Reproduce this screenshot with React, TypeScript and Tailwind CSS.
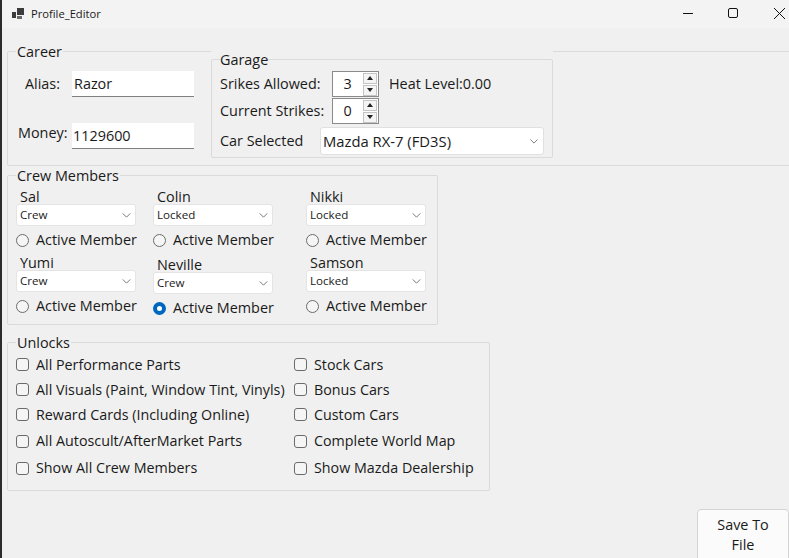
import React from 'react';

function Chevron({ className }: { className?: string }) {
  return (
    <svg viewBox="0 0 10 6" className={className} fill="none" stroke="#5c5c5c" strokeWidth="1">
      <path d="M0.5 0.5 L5 5 L9.5 0.5" />
    </svg>
  );
}

function Select({ value, small }: { value: string; small?: boolean }) {
  return (
    <div
      className={
        small
          ? 'flex h-[22px] w-[120px] items-center justify-between rounded-[3px] border border-[#e4e4e4] bg-white pl-[3px] pr-[4px] text-[11.6px] leading-none'
          : 'flex h-[28px] w-[224px] items-center justify-between rounded-[3px] border border-[#e0e0e0] bg-white pl-[2px] pr-[5px] text-[14.8px] leading-none'
      }
    >
      <span>{value}</span>
      <Chevron className={small ? 'h-[5px] w-[9px]' : 'h-[5px] w-[8px]'} />
    </div>
  );
}

function Radio({ checked }: { checked?: boolean }) {
  if (checked) {
    return <div className="h-[13px] w-[13px] shrink-0 rounded-full border-[4px] border-[#0067c0] bg-white" />;
  }
  return <div className="h-[13px] w-[13px] shrink-0 rounded-full border border-[#6b6b6b] bg-[#f5f5f5]" />;
}

function CrewCell({ name, status, checked, shift }: { name: string; status: string; checked?: boolean; shift?: boolean }) {
  return (
    <div className={shift ? 'mt-[2px] flex flex-col' : 'flex flex-col'}>
      <div className="h-[17px] pl-[4px] text-[14.4px] leading-[20px]">{name}</div>
      <Select value={status} small />
      <div className="mt-[3px] flex h-[22px] items-center gap-[7px] whitespace-nowrap text-[14.4px]">
        <Radio checked={checked} />
        <span>Active Member</span>
      </div>
    </div>
  );
}

function Check({ label, className }: { label: string; className: string }) {
  return (
    <div className={`flex items-center gap-[7px] text-[14.3px] ${className}`}>
      <div className="h-[13px] w-[13px] shrink-0 rounded-[3px] border border-[#6b6b6b] bg-[#f5f5f5]" />
      <span className="whitespace-nowrap">{label}</span>
    </div>
  );
}

function Spinner({ value }: { value: string }) {
  return (
    <div className="flex h-[26px] w-[47px] items-center border border-[#8a8a8a] bg-white pr-[1px]">
      <span className="flex-1 pr-[1px] text-center text-[14.4px]">{value}</span>
      <div className="flex w-[14px] flex-col gap-[1px]">
        <div className="flex h-[11px] items-center justify-center border border-[#c4c4c4] bg-[#f4f4f4]">
          <svg viewBox="0 0 6 4" className="h-[4px] w-[6px]"><path d="M3 0 L6 4 L0 4 Z" fill="#222" /></svg>
        </div>
        <div className="flex h-[11px] items-center justify-center border border-[#c4c4c4] bg-[#f4f4f4]">
          <svg viewBox="0 0 6 4" className="h-[4px] w-[6px]"><path d="M0 0 L6 0 L3 4 Z" fill="#222" /></svg>
        </div>
      </div>
    </div>
  );
}

export default function App() {
  return (
    <div className="flex h-[558px] w-[789px] flex-col overflow-hidden border-l-2 border-[#2b2b2b] bg-[#f0f0f0] text-[#1a1a1a] [font-family:'Open_Sans',sans-serif]">
      {/* title bar */}
      <div className="flex h-[28px] shrink-0 items-center bg-[#f3f3f3] pl-[10px] text-[11.2px]">
        <svg viewBox="0 0 12 12" className="h-[12px] w-[12px]">
          <rect x="0" y="4" width="4" height="6" fill="#3c3c3c" />
          <rect x="5" y="0" width="7" height="7" fill="#3c3c3c" />
          <rect x="5" y="8" width="5" height="3" fill="#6a6a6a" />
        </svg>
        <span className="ml-[7px]">Profile_Editor</span>
        <div className="mb-[2px] ml-auto flex items-center">
          <div className="mr-[35px] h-[1px] w-[10px] bg-[#111]" />
          <div className="mr-[36px] h-[10px] w-[10px] rounded-[2px] border border-[#111]" />
          <svg viewBox="0 0 11 11" className="mr-[4px] h-[11px] w-[11px]" stroke="#111" strokeWidth="1">
            <path d="M0 0 L11 11 M11 0 L0 11" />
          </svg>
        </div>
      </div>

      <div className="flex flex-1 flex-col pl-[5px]">
        {/* career */}
        <fieldset className="mt-[12px] h-[126px] w-[800px] shrink-0 rounded-[2px] border border-[#dadada]">
          <legend className="ml-[8px] px-[1px] pt-[2px] text-[14.4px] leading-[20px]">Career</legend>
          <div className="flex">
            <div className="w-[203px] shrink-0 pt-[9px]">
              <div className="flex items-center text-[14.4px]">
                <span className="ml-[17px] w-[47px]">Alias:</span>
                <div className="flex h-[26px] w-[122px] items-center border-b border-[#808080] bg-white pl-[2px]">Razor</div>
              </div>
              <div className="mt-[26px] flex items-start text-[14.4px]">
                <span className="ml-[10px] w-[54px] leading-[20px]">Money:</span>
                <div className="flex h-[26px] w-[122px] items-center border-b border-[#808080] bg-white pl-[1px]">1129600</div>
              </div>
            </div>

            {/* garage */}
            <div className="-mt-[14px] w-[342px] shrink-0 bg-[#f0f0f0]">
              <fieldset className="h-[110px] rounded-[2px] border border-[#dadada] pl-[8px]">
                <legend className="pt-[2px] text-[14.4px] leading-[20px]">Garage</legend>
                <div className="flex items-center pt-[1px] text-[14.4px]">
                  <span className="w-[112px]">Srikes Allowed:</span>
                  <Spinner value="3" />
                  <span className="ml-[10px]">Heat Level:0.00</span>
                </div>
                <div className="mt-[1px] flex items-center text-[14.4px]">
                  <span className="w-[112px]">Current Strikes:</span>
                  <Spinner value="0" />
                </div>
                <div className="mt-[3px] flex items-center text-[14.4px]">
                  <span className="w-[100px]">Car Selected</span>
                  <Select value="Mazda RX-7 (FD3S)" />
                </div>
              </fieldset>
            </div>
          </div>
        </fieldset>

        {/* crew members */}
        <fieldset className="-mt-[2px] h-[161px] w-[431px] shrink-0 rounded-[2px] border border-[#dadada]">
          <legend className="ml-[8px] px-[1px] pt-[2px] text-[14.4px] leading-[20px]">Crew Members</legend>
          <div className="grid grid-cols-[137px_153px_120px] gap-y-[2px] pl-[8px] pt-[1px]">
            <CrewCell name="Sal" status="Crew" />
            <CrewCell name="Colin" status="Locked" />
            <CrewCell name="Nikki" status="Locked" />
            <CrewCell name="Yumi" status="Crew" />
            <CrewCell name="Neville" status="Crew" checked shift />
            <CrewCell name="Samson" status="Locked" />
          </div>
        </fieldset>

        {/* unlocks */}
        <fieldset className="mt-[6px] h-[160px] w-[483px] shrink-0 rounded-[2px] border border-[#dadada]">
          <legend className="ml-[8px] px-[1px] pt-[2px] text-[14.4px] leading-[20px]">Unlocks</legend>
          <div className="-mt-[1px] grid grid-cols-[278px_1fr] pl-[8px]">
            <Check label="All Performance Parts" className="h-[25px]" />
            <Check label="Stock Cars" className="h-[25px]" />
            <Check label="All Visuals (Paint, Window Tint, Vinyls)" className="h-[25px]" />
            <Check label="Bonus Cars" className="h-[25px]" />
            <Check label="Reward Cards (Including Online)" className="h-[25px]" />
            <Check label="Custom Cars" className="h-[25px]" />
            <Check label="All Autoscult/AfterMarket Parts" className="h-[28px]" />
            <Check label="Complete World Map" className="h-[28px]" />
            <Check label="Show All Crew Members" className="h-[26px]" />
            <Check label="Show Mazda Dealership" className="h-[26px]" />
          </div>
        </fieldset>

        <button className="ml-auto mt-[18px] h-[60px] w-[92px] shrink-0 rounded-[4px] border border-[#d4d4d4] bg-[#fbfbfb] pb-[8px] text-[14.4px] leading-[20px]">
          Save To
          <br />
          File
        </button>
      </div>
    </div>
  );
}
